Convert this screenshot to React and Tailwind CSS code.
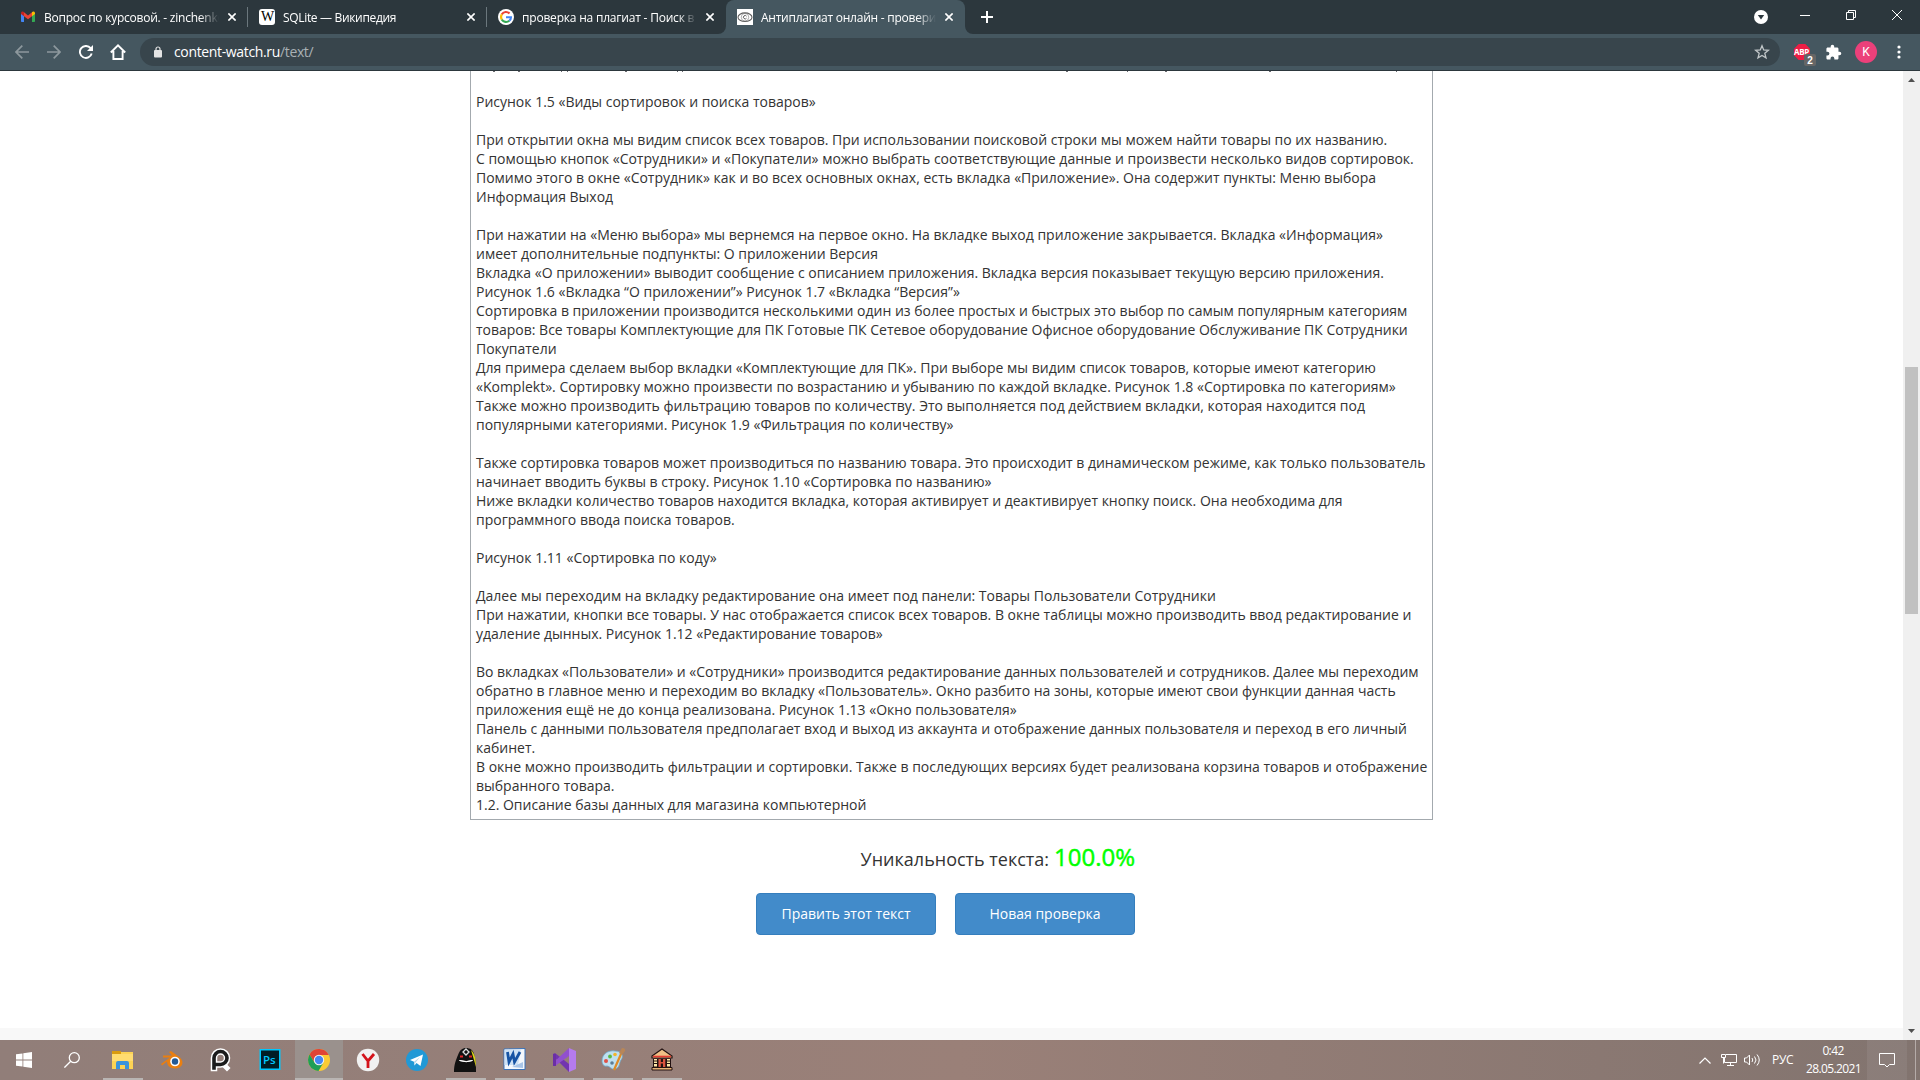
import React from "react";

const LINES = [
  "Рисунок 1.5 «Виды сортировок и поиска товаров»",
  "",
  "При открытии окна мы видим список всех товаров. При использовании поисковой строки мы можем найти товары по их названию.",
  "С помощью кнопок «Сотрудники» и «Покупатели» можно выбрать соответствующие данные и произвести несколько видов сортировок.",
  "Помимо этого в окне «Сотрудник» как и во всех основных окнах, есть вкладка «Приложение». Она содержит пункты: Меню выбора",
  "Информация Выход",
  "",
  "При нажатии на «Меню выбора» мы вернемся на первое окно. На вкладке выход приложение закрывается. Вкладка «Информация»",
  "имеет дополнительные подпункты: О приложении Версия",
  "Вкладка «О приложении» выводит сообщение с описанием приложения. Вкладка версия показывает текущую версию приложения.",
  "Рисунок 1.6 «Вкладка “О приложении”» Рисунок 1.7 «Вкладка “Версия”»",
  "Сортировка в приложении производится несколькими один из более простых и быстрых это выбор по самым популярным категориям",
  "товаров: Все товары Комплектующие для ПК Готовые ПК Сетевое оборудование Офисное оборудование Обслуживание ПК Сотрудники",
  "Покупатели",
  "Для примера сделаем выбор вкладки «Комплектующие для ПК». При выборе мы видим список товаров, которые имеют категорию",
  "«Komplekt». Сортировку можно произвести по возрастанию и убыванию по каждой вкладке. Рисунок 1.8 «Сортировка по категориям»",
  "Также можно производить фильтрацию товаров по количеству. Это выполняется под действием вкладки, которая находится под",
  "популярными категориями. Рисунок 1.9 «Фильтрация по количеству»",
  "",
  "Также сортировка товаров может производиться по названию товара. Это происходит в динамическом режиме, как только пользователь",
  "начинает вводить буквы в строку. Рисунок 1.10 «Сортировка по названию»",
  "Ниже вкладки количество товаров находится вкладка, которая активирует и деактивирует кнопку поиск. Она необходима для",
  "программного ввода поиска товаров.",
  "",
  "Рисунок 1.11 «Сортировка по коду»",
  "",
  "Далее мы переходим на вкладку редактирование она имеет под панели: Товары Пользователи Сотрудники",
  "При нажатии, кнопки все товары. У нас отображается список всех товаров. В окне таблицы можно производить ввод редактирование и",
  "удаление дынных. Рисунок 1.12 «Редактирование товаров»",
  "",
  "Во вкладках «Пользователи» и «Сотрудники» производится редактирование данных пользователей и сотрудников. Далее мы переходим",
  "обратно в главное меню и переходим во вкладку «Пользователь». Окно разбито на зоны, которые имеют свои функции данная часть",
  "приложения ещё не до конца реализована. Рисунок 1.13 «Окно пользователя»",
  "Панель с данными пользователя предполагает вход и выход из аккаунта и отображение данных пользователя и переход в его личный",
  "кабинет.",
  "В окне можно производить фильтрации и сортировки. Также в последующих версиях будет реализована корзина товаров и отображение",
  "выбранного товара.",
  "1.2. Описание базы данных для магазина компьютерной",
];

const GmailIcon = () => (
  <svg viewBox="0 0 16 16" className="size-4">
    <path d="M1 4v8.2c0 .5.3.8.8.8H4V6.2z" fill="#4285f4" />
    <path d="M15 4v8.2c0 .5-.3.8-.8.8H12V6.2z" fill="#34a853" />
    <path d="M4 3.3 8 6.5l4-3.2v4L8 10.3 4 7.3z" fill="#ea4335" />
    <path d="M1 4.2C1 2.4 2.9 1.9 4 3.1v4.2L1 5z" fill="#c5221f" />
    <path d="M15 4.2c0-1.8-1.9-2.3-3-1.1v4.2L15 5z" fill="#fbbc04" />
  </svg>
);

const WikiIcon = () => (
  <span className="flex size-4 items-center justify-center rounded-[3px] bg-white font-['Liberation_Serif',serif] text-[14px] leading-none tracking-[-1px] text-black">W</span>
);

const GoogleIcon = () => (
  <svg viewBox="0 0 16 16" className="size-4">
    <circle cx="8" cy="8" r="8" fill="#fff" />
    <g fill="none" strokeWidth="2.1">
      <path d="M3.800 5.400A4.900 4.900 0 0 1 11.500 4.500" stroke="#ea4335" />
      <path d="M3.800 10.600a5 5 0 0 1 0-5.200" stroke="#fbbc05" />
      <path d="M11.300 11.700a5 5 0 0 1-7.500-1.100" stroke="#34a853" />
      <path d="M8 8.200h5c0 1.600-.7 2.700-1.700 3.500" stroke="#4285f4" />
    </g>
  </svg>
);

const EyeIcon = () => (
  <svg viewBox="0 0 16 16" className="size-4" fill="none" stroke="#5f5f5f">
    <path d="M0 0h16v16H0z" fill="#fff" stroke="none" />
    <ellipse cx="8" cy="8.200" rx="7" ry="4.300" strokeWidth="1.100" />
    <circle cx="8" cy="8.200" r="3.800" strokeWidth=".5" />
    <path d="M9.500 7.200a1.700 1.700 0 1 0 0 2" />
  </svg>
);

const CloseIcon = () => (
  <svg viewBox="0 0 8 8" className="size-2 shrink-0" stroke="#fff" strokeWidth="1.6">
    <path d="M.4.4l7.2 7.2M7.6.4.4 7.6" />
  </svg>
);

const TABS = [
  { icon: GmailIcon, title: "Вопрос по курсовой. - zinchenko", cls: "tracking-[-0.24px]" },
  { icon: WikiIcon, title: "SQLite — Википедия", cls: "tracking-[-0.33px]" },
  { icon: GoogleIcon, title: "проверка на плагиат - Поиск в Google", cls: "tracking-[-0.2px]" },
  { icon: EyeIcon, title: "Антиплагиат онлайн - проверить", cls: "tracking-[-0.24px]", active: true },
];

function Tab({ icon: Icon, title, cls, active, sep }) {
  return (
    <div
      className={
        "relative flex h-[34px] w-[239px] shrink-0 items-center pl-[11px] " +
        (active ? "rounded-t-[8px] bg-[#455760]" : "")
      }
    >
      <Icon />
      <div className="mb-[2px] ml-2 w-[175px] overflow-hidden whitespace-nowrap [mask-image:linear-gradient(to_right,#000_89%,transparent_100%)]">
        <span className={"text-[12px] leading-4 text-white " + cls}>{title}</span>
      </div>
      <div className="ml-[9px] flex"><CloseIcon /></div>
      {sep && <div className="absolute right-0 top-[7px] h-5 w-px bg-[#6b777d]" />}
      {active && (
        <>
          <svg className="absolute bottom-0 -left-2 size-2" viewBox="0 0 8 8"><path d="M8 0v8H0a8 8 0 0 0 8-8" fill="#455760" /></svg>
          <svg className="absolute bottom-0 -right-2 size-2" viewBox="0 0 8 8"><path d="M0 0v8h8a8 8 0 0 1-8-8" fill="#455760" /></svg>
        </>
      )}
    </div>
  );
}

function TabStrip() {
  return (
    <div className="flex h-[34px] items-center bg-[#2c373d] pl-[9px]">
      {TABS.map((t, i) => (
        <Tab key={t.title} {...t} sep={i < 2} />
      ))}
      <svg viewBox="0 0 12 12" className="ml-4 size-3" stroke="#fff" strokeWidth="2"><path d="M6 0v12M0 6h12" /></svg>
      <div className="ml-auto flex items-center">
        <svg viewBox="0 0 14 14" className="size-[14px]"><circle cx="7" cy="7" r="7" fill="#fff" /><path d="M3.8 5h6.4L7 9.5z" fill="#2c373d" /></svg>
        <svg viewBox="0 0 10 10" className="mb-[5px] ml-8 size-[10px]"><path d="M0 5.5h10" stroke="#fff" /></svg>
        <svg viewBox="0 0 10 10" className="mb-[5px] ml-9 size-[10px]" fill="none" stroke="#fff"><path d="M.5 2.5h7v7h-7zM2.5 2.5v-2h7v7h-2" /></svg>
        <svg viewBox="0 0 10 10" className="mb-[5px] ml-9 mr-[18px] size-[10px]" stroke="#fff"><path d="M0 0l10 10M10 0 0 10" /></svg>
      </div>
    </div>
  );
}

function Toolbar() {
  return (
    <div className="flex h-[37px] items-center border-b border-[#2c373d] bg-[#455760] pl-[15px]">
      <svg viewBox="0 0 14 14" className="size-[14px]" fill="none" stroke="#8d989d" strokeWidth="1.7"><path d="M14 7H1M7.3.7 1 7l6.3 6.3" /></svg>
      <svg viewBox="0 0 14 14" className="ml-[18px] size-[14px]" fill="none" stroke="#8d989d" strokeWidth="1.7"><path d="M0 7h13M6.7.7 13 7l-6.3 6.3" /></svg>
      <svg viewBox="0 0 14 14" className="ml-[18px] size-[14px]" fill="none" stroke="#fff" strokeWidth="1.9"><path d="M12.7 8.5A6 6 0 1 1 11.6 3.2" /><path d="M14 0v6H8z" fill="#fff" stroke="none" /></svg>
      <svg viewBox="0 0 16 16" className="ml-[17px] size-4" fill="none" stroke="#fff" strokeWidth="1.9"><path d="M.8 8.5 8 1.4l7.2 7.1M3.4 7v8h9.2V7" /></svg>
      <div className="ml-[14px] flex h-7 w-[1640px] items-center rounded-full bg-[#38454c] pl-[14px] pr-[10px]">
        <svg viewBox="0 0 8 12" className="h-3 w-2"><rect y="4" width="8" height="7.5" rx="1" fill="#e4e4e4" /><path d="M2 4.5V3a2 2 0 0 1 4 0v1.500" fill="none" stroke="#e4e4e4" strokeWidth="1.2" /></svg>
        <div className="ml-3 text-[14px] leading-5 tracking-[-0.35px] text-white">
          content-watch.ru<span className="text-[#a9b1b5]">/text/</span>
        </div>
        <svg viewBox="0 0 16 16" className="ml-auto size-4" fill="none" stroke="#c2c7c9" strokeWidth="1.3"><path d="m8 1.800 1.700 4.200 4.700.3-3.600 3 1.200 4.600L8 11.400l-4 2.500 1.200-4.600-3.600-3 4.700-.3z" /></svg>
      </div>
      <div className="relative ml-[14px] size-4">
        <svg viewBox="0 0 16 16" className="size-4"><path d="M4.700 0h6.600L16 4.700v6.600L11.300 16H4.700L0 11.300V4.700z" fill="#ed1e45" /></svg>
        <span className="absolute left-0 top-[3px] text-[8px] font-bold leading-[10px] tracking-[-0.3px] text-white">ABP</span>
        <span className="absolute left-[10px] top-[10px] flex h-3 w-3 items-center justify-center rounded-[2px] bg-[#666] font-['Liberation_Sans',sans-serif] text-[10px] font-bold text-white">2</span>
      </div>
      <svg viewBox="0 0 24 24" className="ml-[15px] size-[17px]" fill="#fff"><path d="M20.500 11H19V7c0-1.100-.9-2-2-2h-4V3.500a2.500 2.500 0 0 0-5 0V5H4c-1.100 0-2 .9-2 2v3.800h1.500a2.700 2.700 0 0 1 0 5.400H2V20c0 1.100.9 2 2 2h3.800v-1.500a2.700 2.700 0 0 1 5.400 0V22H17c1.100 0 2-.9 2-2v-4h1.500a2.500 2.500 0 0 0 0-5z" /></svg>
      <div className="ml-[13px] flex size-[22px] items-center justify-center rounded-full bg-[#ec407a] font-[Roboto,sans-serif] text-[12px] text-white">K</div>
      <svg viewBox="0 0 4 14" className="ml-5 h-[14px] w-1" fill="#fff"><circle cx="2" cy="2" r="1.600" /><circle cx="2" cy="7" r="1.600" /><circle cx="2" cy="12" r="1.600" /></svg>
    </div>
  );
}

function Scrollbar() {
  return (
    <div className="flex h-full w-[17px] shrink-0 flex-col items-center bg-[#f0f0f0]">
      <svg viewBox="0 0 7 4" className="mt-[7px] h-1 w-[7px]"><path d="M0 4 3.500 0 7 4z" fill="#505050" /></svg>
      <div className="mt-[285px] h-[247px] w-[13px] bg-[#c1c1c1]" />
      <svg viewBox="0 0 7 4" className="mb-[7px] mt-auto h-1 w-[7px]"><path d="M0 0h7L3.500 4z" fill="#505050" /></svg>
    </div>
  );
}

function Page() {
  return (
    <div className="flex h-[969px] bg-white">
      <div className="flex min-w-0 grow flex-col">
        <div className="ml-[470px] h-[749px] w-[963px] border border-t-0 border-[#a3a9ae] pl-[5px]">
          {/* Descenders of the line that is scrolled out of view */}
          <svg className="block h-[21px] w-[940px]" viewBox="0 0 940 21" fill="#6b6b70">
            <path d="M17 0h2v1h-2zM42 0h2v1h-2zM85 0h1v1h-1zM91 0h1v1h-1zM149 0h2v1h-2zM201 0h1v1h-1zM206 0h1v1h-1zM590 0h2v1h-2zM651 0h1v1h-1zM689 0h2v1h-2zM793 0h2v1h-2zM920 0h1v1h-1z" />
          </svg>
          {LINES.map((line, i) => (
            <div key={i} className="h-[19px] whitespace-nowrap text-[14px] leading-[19px] tracking-[-0.006px] text-[#333]">{line}</div>
          ))}
        </div>
        <div className="ml-[470px] mt-[21px] flex h-[32px] w-[665px] items-baseline justify-end text-[#333]">
          <span className="text-[18px] leading-8">Уникальность текста:</span>
          <span className="ml-[5px] text-[24px] leading-8 tracking-[-0.02px] text-[#0f0] [-webkit-text-stroke:0.5px_#0f0]">100.0%</span>
        </div>
        <div className="ml-[756px] mt-[20px] flex gap-[19px]">
          {["Править этот текст", "Новая проверка"].map((t) => (
            <button key={t} className="h-[42px] w-[180px] rounded-[4px] border border-[#357ebd] bg-[#428bca] text-[14px] leading-5 text-white">{t}</button>
          ))}
        </div>
        <div className="mt-auto h-3 bg-[#f8f8f8]" />
      </div>
      <Scrollbar />
    </div>
  );
}

const APPS = [
  {
    id: "explorer", run: true,
    art: <><path d="M1 3h8l1 1h12v17H1z" fill="#fcd354" /><path d="M1 3h9v3H1z" fill="#d99b10" /><path d="M1 6h21v7H1z" fill="#ffdc70" /><path d="M5 21v-6q0-2 2-2h9q2 0 2 2v6h-4v-4H9v4z" fill="#3a94dc" /></>,
  },
  {
    id: "blender",
    art: <><path d="M1 16 10 9.500H3V7.500h9L9 4l2-1 9 6.500c5 5 2 11-5 11-5 0-8-3-8-7l-5 4z" fill="#ea7f10" /><circle cx="15" cy="13.500" r="4.800" fill="#fff" /><circle cx="15" cy="13.500" r="3.200" fill="#235a96" /></>,
  },
  {
    id: "pureref",
    art: <><g fill="none" strokeLinecap="square"><path d="M5 20V10a6.500 6.500 0 1 1 6.500 6.500" stroke="#fff" strokeWidth="6.500" /><path d="m17 19 1 1" stroke="#fff" strokeWidth="5" /><path d="M5 20V10a6.500 6.500 0 1 1 6.500 6.500H8" stroke="#1b1b1b" strokeWidth="3.600" /></g></>,
  },
  {
    id: "photoshop",
    art: <><path d="M1.500 1h21v21h-21z" fill="#00c8ff" /><path d="M3 2.500h18v18H3z" fill="#001d26" /><text x="5" y="15.500" fontSize="11.500" fontWeight="600" fill="#00c8ff">Ps</text></>,
  },
  {
    id: "chrome", run: true, active: true,
    art: <><circle cx="12" cy="12" r="11" fill="#fbcb34" /><path d="M2.500 6.500A11 11 0 0 1 21.800 7H12L7.500 14.500z" fill="#e04437" /><path d="M2.500 6.500A11 11 0 0 0 11.500 23l5-8.500h-9z" fill="#1e9e58" /><circle cx="12" cy="12" r="5.200" fill="#f5f5f5" /><circle cx="12" cy="12" r="4.200" fill="#4687f4" /></>,
  },
  {
    id: "yandex",
    art: <><circle cx="12" cy="12" r="11.200" fill="#f1f1f1" /><path d="M6.500 6 12 13l6-7M12 12.500V20" fill="none" stroke="#d3131b" strokeWidth="2.800" /></>,
  },
  {
    id: "telegram",
    art: <><circle cx="12" cy="12" r="11" fill="#2199d6" /><path d="M5 12 18 6.500 15.500 18l-4-3-2 2.500-.5-3.800z" fill="#fff" /><path d="m9 13.700 6-4.700-4.500 5.500-1 3z" fill="#b5d7ea" /></>,
  },
  {
    id: "mask", run: true,
    art: <><path d="M0 24C0 16 2 12 4 7 6 2 8 0 12 0s7 2 8 6c2 6 2 12 2 18z" fill="#111" /><path d="M17 2c4 4 5 9 5 17l-2-7z" fill="#d9d31b" /><path d="m12 1 3 3-3 3-3-3z" fill="none" stroke="#ddd" strokeWidth="1.300" /><path d="M6 7.500h3v2H6zM15 7.500h3v2h-3z" fill="#e02424" /><path d="M5.500 12.500q7 2 13 0-6 2.500-13 0z" fill="#fff" stroke="#fff" /></>,
  },
  {
    id: "word", run: true,
    art: <><path d="M1 1 22 .500v21H1z" fill="#f4f8fd" stroke="#3b73b8" /><path d="M1.500 1.500H18L15 17H1.500z" fill="#cfe2f5" /><path d="m4.500 4 1.500 10 4-8 1.500 8L17 4" fill="none" stroke="#1653a4" strokeWidth="2.800" /><path d="m9 19 11-5v6z" fill="#a8c5e8" /></>,
  },
  {
    id: "visual-studio", run: true,
    art: <><path d="m1 6 2-1 14 11v8L1 8z" fill="#7235b0" /><path d="m1 17 2 1L17 8V0L1 15z" fill="#9150ce" /><path d="M1 6h3v12H1z" fill="#6b2fa5" /><path d="m17 0 7 3v18l-7 3z" fill="#b57bee" /></>,
  },
  {
    id: "paint", run: true,
    art: <><path d="M1 13C1 6 7 2 14 3c7 0 9 5 6 9-2 3-1 8-6 9-4 1-5-3-8-3-3 1-5-2-5-5z" fill="#bfe0f0" stroke="#6fa6c6" strokeWidth=".8" /><circle cx="5" cy="13" r="2" fill="#e05246" /><circle cx="9" cy="8.500" r="1.900" fill="#58b947" /><circle cx="14" cy="6.500" r="1.800" fill="#f3b52c" /><circle cx="11" cy="15" r="1.800" fill="#5d7d94" /><path d="M13 22 20 6" stroke="#e08b25" strokeWidth="2.200" /><path d="m18 5 3-5q4 0 3 3l-3 4z" fill="#b88658" /></>,
  },
  {
    id: "bank", run: true,
    art: <><path d="M2 8 12 1l10 7v2H2z" fill="#f0c086" stroke="#211" strokeWidth="1.200" /><path d="M3 8.500h18" stroke="#e63c34" strokeWidth="1.600" /><path d="M3 10.500h18V19H3z" fill="#211" /><path d="M4 11h3v1.500H4zM4 13.500h3V15H4zM4 16h3v2.500H4zM17 11h3v1.500h-3zM17 13.500h3V15h-3zM17 16h3v2.500h-3z" fill="#ffe8a8" /><path d="M8.500 11h2.300v8H8.500zM13 11h2.300v8H13zM10.500 14h3v1.500h-3z" fill="#dc5440" /><path d="M2 19.500h20v2.500H2z" fill="#e9b477" stroke="#211" /></>,
  },
];

function Taskbar() {
  return (
    <div className="flex h-10 items-stretch bg-linear-to-r from-[#917e79] via-[#9a8078] to-[#82746f]">
      <div className="flex w-12 items-center justify-center">
        <svg viewBox="0 0 16 16" className="size-4" fill="#fff"><path d="M0 2.300 6.500 1.400v6.200H0zM7.300 1.300 16 0v7.600H7.300zM0 8.400h6.500v6.200L0 13.700zM7.300 8.400H16V16l-8.700-1.300z" /></svg>
      </div>
      <div className="flex w-12 items-center justify-center">
        <svg viewBox="0 0 16 16" className="size-4" fill="none" stroke="#fff" strokeWidth="1.300"><circle cx="10.300" cy="5.700" r="5" /><path d="M6.700 9.300.4 15.600" /></svg>
      </div>
      <div className="ml-[3px] flex">
        {APPS.map((a) => (
          <div key={a.id} className={"relative flex w-[49px] justify-center border-r border-transparent bg-clip-padding pt-2 " + (a.active ? "bg-[#9a918d]" : "")}>
            <svg viewBox="0 0 24 24" className="size-6 overflow-visible">{a.art}</svg>
            {a.run && <div className={"absolute bottom-0 h-[2px] bg-[#b9b5b3] " + (a.active ? "inset-x-0" : "inset-x-1")} />}
          </div>
        ))}
      </div>
      <div className="ml-auto flex items-center text-white">
        <svg viewBox="0 0 12 7" className="h-[7px] w-3" fill="none" stroke="#fff" strokeWidth="1.200"><path d="M.5 6.500 6 1l5.500 5.500" /></svg>
        <svg viewBox="0 0 16 14" className="ml-[10px] h-[14px] w-4" fill="none" stroke="#fff"><path d="M5 1.500h10.500v8H3.500V5M9.500 9.500v3M6 12.500h7M.5 1.500h4v3h-4zM2.500 4.500v6" /></svg>
        <svg viewBox="0 0 17 14" className="ml-[7px] h-[14px] w-[17px]" fill="none" stroke="#fff"><path d="M.5 5v4h2l3 3V2l-3 3zM8 5q1.500 2 0 4M10.500 3.500q3 3.500 0 7M13 1.500q4.500 5.500 0 11" /></svg>
        <span className="ml-[11px] w-[22px] whitespace-nowrap text-[12px] leading-4 tracking-[-0.3px]">РУС</span>
        <div className="mb-px ml-[12px] mr-px w-[54px] whitespace-nowrap text-center text-[12px] leading-[18px] tracking-[-0.63px]">
          <div>0:42</div>
          <div>28.05.2021</div>
        </div>
        <div className="ml-[6px] flex h-10 w-10 items-center justify-center bg-[#ffffff12]">
          <svg viewBox="0 0 16 16" className="size-4" fill="none" stroke="#fff"><path d="M.5 1.500h15v11H10.500L8 15 5.500 12.500H.5z" /></svg>
        </div>
        <div className="ml-[8px] h-10 w-px bg-[#b5aba8]" />
        <div className="w-1" />
      </div>
    </div>
  );
}

export default function App() {
  return (
    <div className="h-[1080px] w-[1920px] overflow-hidden font-['Open_Sans',sans-serif]">
      <TabStrip />
      <Toolbar />
      <Page />
      <Taskbar />
    </div>
  );
}
